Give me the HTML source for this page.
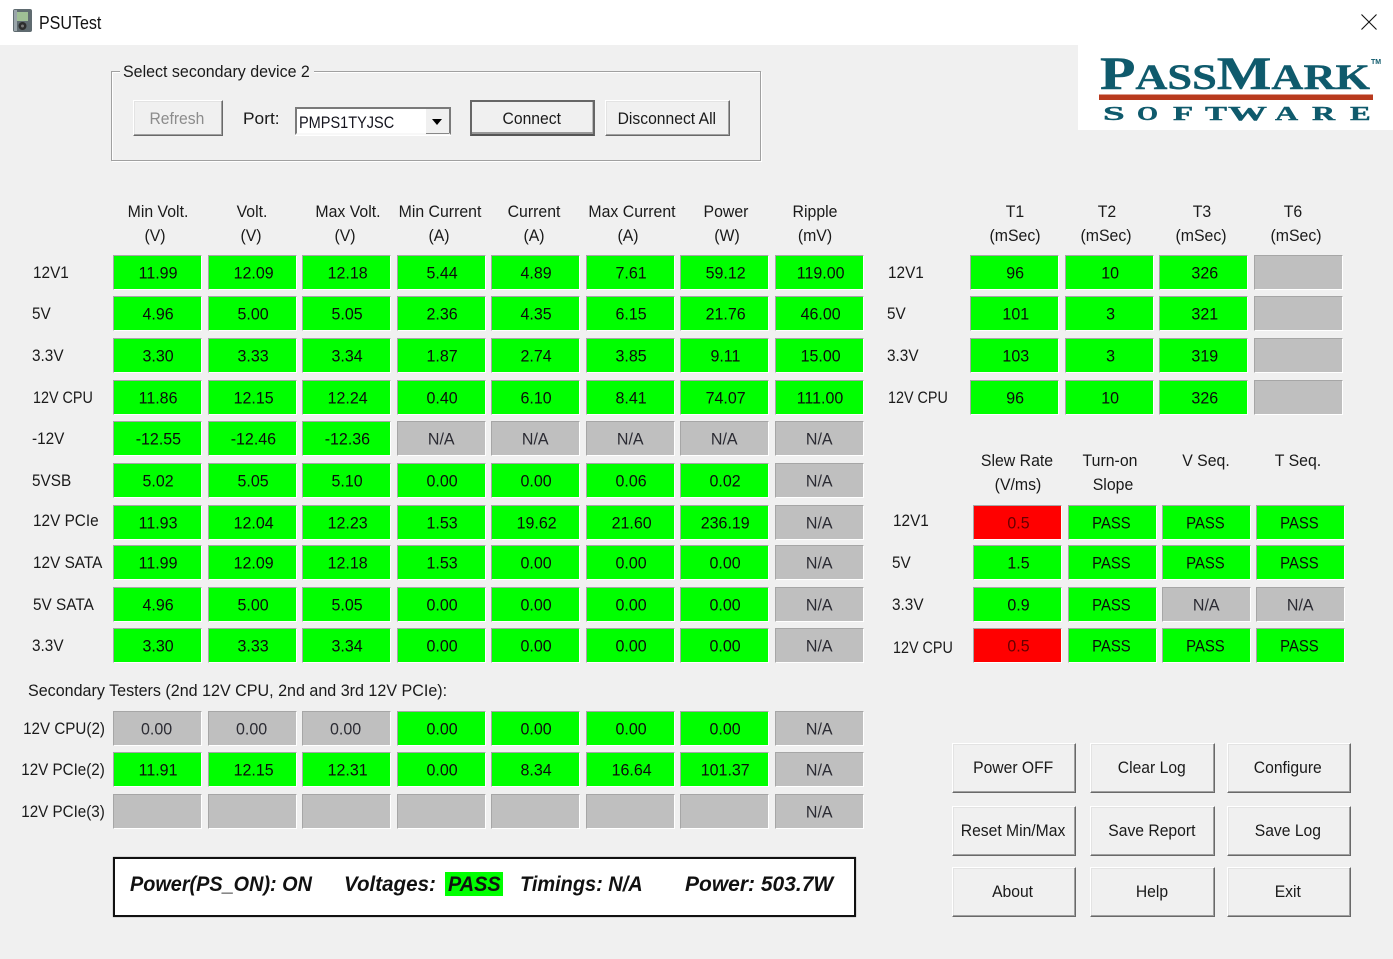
<!DOCTYPE html>
<html><head><meta charset="utf-8"><title>PSUTest</title>
<style>
html,body{margin:0;padding:0;width:1393px;height:959px;overflow:hidden;background:#f0f0f0}
body{position:relative;font:16.5px "Liberation Sans",sans-serif;color:#1a1a1a}
#title{position:absolute;left:0;top:0;width:1393px;height:45px;background:#fff}
.t,.l,.rt{position:absolute;white-space:nowrap;line-height:20px}
.t{transform:translate(-50%,-50%) scaleX(.96)}
.l{transform:translateY(-50%) scaleX(.93);transform-origin:left center}
.l.k{transform:translateY(-50%) scaleX(.87)}
.rt{transform:translateY(-50%) scaleX(.92);transform-origin:right center}
.r{position:absolute;left:0;top:0;width:1393px;height:35px}
.r span{position:absolute;top:0;width:87px;height:33px;border:1px solid;border-color:#a6a6a6 #fff #fff #a6a6a6;display:flex;align-items:center;justify-content:center;color:#0c0c0c}
.r span b{font-weight:normal;display:block;transform:translate(1px,.5px) scaleX(.97);line-height:20px}
.r span b.o{transform:translate(-1px,.5px) scaleX(.9)}
.r .g{background:#00ff00}
.r .n{background:#bfbfbf;color:#2b2b33}
.r .n b{transform:translate(-.5px,.5px) scaleX(.97)}
.r .x{background:#ff0000;color:#600}
.a{left:113px}.b{left:208px}.c{left:302px}.d{left:397px}.e{left:491px}.f{left:586px}.h{left:680px}.j{left:775px}
.p{left:970px}.q{left:1065px}.s{left:1159px}.u{left:1254px}
.v{left:973px}.w{left:1068px}.y{left:1162px}.z{left:1256px}
.btn{position:absolute;box-sizing:border-box;background:#f0f0f0;border:1px solid;border-color:#fff #696969 #696969 #fff;box-shadow:inset -1px -1px 0 #a0a0a0,inset 1px 1px 0 #e3e3e3;display:flex;align-items:center;justify-content:center}
.btn b{font-weight:normal;display:block;transform:translateX(-1px) scaleX(.95);white-space:nowrap}
.btn.top b{transform:translate(-1px,1px) scaleX(.95)}
#status{position:absolute;left:113px;top:857px;width:739px;height:56px;background:#fff;border:2px solid #111;box-shadow:0 0 1px #777}
.st{position:absolute;top:885px;white-space:nowrap;font:italic bold 21px "Liberation Sans",sans-serif;color:#111;transform:translateY(-50%);transform-origin:left center;line-height:24px}
</style></head><body>
<div id="title"></div>
<svg style="position:absolute;left:13px;top:9px" width="20" height="24" viewBox="0 0 20 24"><rect x="0" y="0" width="19" height="23" rx="2" fill="#5f6b70"/><rect x="1" y="1" width="3" height="21" fill="#9aa5aa"/><rect x="4" y="3" width="11" height="9" fill="#9fbf95"/><circle cx="9.5" cy="17" r="4" fill="#2d2d2d"/><circle cx="9.5" cy="17" r="1.5" fill="#777"/></svg>
<div class="l" style="left:39px;top:23px;color:#111;font-size:18px;transform:translateY(-50%) scaleX(.89)">PSUTest</div>
<svg style="position:absolute;left:1360px;top:13px" width="18" height="18" viewBox="0 0 18 18"><path d="M1.5 1.5L16.5 16.5M16.5 1.5L1.5 16.5" stroke="#111" stroke-width="1.1" fill="none"/></svg>

<svg style="position:absolute;left:1078px;top:45px" width="315" height="85" viewBox="0 0 315 85">
<rect width="315" height="85" fill="#fff"/>
<text x="22" y="44" textLength="270" lengthAdjust="spacingAndGlyphs" font-family="Liberation Serif" font-weight="bold" fill="#0f5a6c" stroke="#0f5a6c" stroke-width=".4"><tspan font-size="47">P</tspan><tspan font-size="36">ASS</tspan><tspan font-size="47">M</tspan><tspan font-size="36">ARK</tspan></text>
<text x="293" y="19" font-family="Liberation Sans" font-weight="bold" font-size="7" fill="#0f5a6c">TM</text>
<rect x="21" y="49.5" width="274" height="5.5" fill="#b83a1e"/>
<g font-family="Liberation Serif" font-weight="bold" font-size="20" fill="#0f5a6c" stroke="#0f5a6c" stroke-width=".4">
<text transform="translate(25,75) scale(1.95,1)">S</text>
<text transform="translate(59,75) scale(1.35,1)">O</text>
<text transform="translate(95,75) scale(1.65,1)">F</text>
<text transform="translate(127,75) scale(1.65,1)">T</text>
<text transform="translate(150,75) scale(1.95,1)">W</text>
<text transform="translate(197,75) scale(1.6,1)">A</text>
<text transform="translate(234,75) scale(1.6,1)">R</text>
<text transform="translate(272,75) scale(1.55,1)">E</text>
</g></svg>

<div style="position:absolute;left:111px;top:71px;width:648px;height:88px;border:1px solid #a0a0a0;box-shadow:1px 1px 0 #fff,inset 1px 1px 0 #fff"></div>
<div style="position:absolute;left:120px;top:62px;width:194px;height:20px;background:#f0f0f0"></div>
<div class="l" style="left:123px;top:72px;transform:translateY(-50%) scaleX(.97)">Select secondary device 2</div>
<div class="btn top" style="left:133px;top:100px;width:90px;height:36px;color:#8c8c8c"><b>Refresh</b></div>
<div class="l" style="left:243px;top:119px;transform:translateY(-50%) scaleX(1.05)">Port:</div>
<div style="position:absolute;left:295px;top:107px;width:152px;height:24px;background:#fff;border:2px solid;border-color:#7a7a7a #7a7a7a #f8f8f8 #7a7a7a;border-right-color:#7a7a7a;box-shadow:0 1px 0 #fff"></div>
<div style="position:absolute;left:426px;top:109px;width:23px;height:25px;background:#f0f0f0;border-bottom:1px solid #888;box-sizing:border-box"></div>
<div style="position:absolute;left:432px;top:119px;width:0;height:0;border:5px solid transparent;border-top:6px solid #000;border-bottom:0"></div>
<div class="l" style="left:299px;top:123px;color:#14141e;transform:translateY(-50%) scaleX(.88)">PMPS1TYJSC</div>
<div class="btn top" style="left:470px;top:100px;width:125px;height:36px;border:2px solid #666;border-bottom-color:#555;box-shadow:inset 0 -2px 0 #999,inset -1px 0 0 #bbb"><b>Connect</b></div>
<div class="btn top" style="left:605px;top:100px;width:125px;height:36px"><b>Disconnect All</b></div>

<div class="t" style="left:158px;top:212px">Min Volt.</div><div class="t" style="left:155px;top:236px">(V)</div>
<div class="t" style="left:252px;top:212px">Volt.</div><div class="t" style="left:251px;top:236px">(V)</div>
<div class="t" style="left:348px;top:212px">Max Volt.</div><div class="t" style="left:345px;top:236px">(V)</div>
<div class="t" style="left:440px;top:212px">Min Current</div><div class="t" style="left:439px;top:236px">(A)</div>
<div class="t" style="left:534px;top:212px">Current</div><div class="t" style="left:534px;top:236px">(A)</div>
<div class="t" style="left:632px;top:212px">Max Current</div><div class="t" style="left:628px;top:236px">(A)</div>
<div class="t" style="left:726px;top:212px">Power</div><div class="t" style="left:727px;top:236px">(W)</div>
<div class="t" style="left:815px;top:212px">Ripple</div><div class="t" style="left:815px;top:236px">(mV)</div>
<div class="t" style="left:1015px;top:212px">T1</div><div class="t" style="left:1015px;top:236px">(mSec)</div>
<div class="t" style="left:1107px;top:212px">T2</div><div class="t" style="left:1106px;top:236px">(mSec)</div>
<div class="t" style="left:1202px;top:212px">T3</div><div class="t" style="left:1201px;top:236px">(mSec)</div>
<div class="t" style="left:1293px;top:212px">T6</div><div class="t" style="left:1296px;top:236px">(mSec)</div>

<div class="l" style="left:33px;top:273px">12V1</div>
<div class="l" style="left:32px;top:314px">5V</div>
<div class="l" style="left:32px;top:356px">3.3V</div>
<div class="l k" style="left:33px;top:398px">12V CPU</div>
<div class="l" style="left:32px;top:439px">-12V</div>
<div class="l" style="left:32px;top:481px">5VSB</div>
<div class="l" style="left:33px;top:521px">12V PCIe</div>
<div class="l" style="left:33px;top:563px">12V SATA</div>
<div class="l" style="left:33px;top:605px">5V SATA</div>
<div class="l" style="left:32px;top:646px">3.3V</div>

<div class="r" style="top:255px"><span class="a g"><b>11.99</b></span><span class="b g"><b>12.09</b></span><span class="c g"><b>12.18</b></span><span class="d g"><b>5.44</b></span><span class="e g"><b>4.89</b></span><span class="f g"><b>7.61</b></span><span class="h g"><b>59.12</b></span><span class="j g"><b>119.00</b></span><span class="p g"><b>96</b></span><span class="q g"><b>10</b></span><span class="s g"><b>326</b></span><span class="u n"></span></div>
<div class="r" style="top:296px"><span class="a g"><b>4.96</b></span><span class="b g"><b>5.00</b></span><span class="c g"><b>5.05</b></span><span class="d g"><b>2.36</b></span><span class="e g"><b>4.35</b></span><span class="f g"><b>6.15</b></span><span class="h g"><b>21.76</b></span><span class="j g"><b>46.00</b></span><span class="p g"><b>101</b></span><span class="q g"><b>3</b></span><span class="s g"><b>321</b></span><span class="u n"></span></div>
<div class="r" style="top:338px"><span class="a g"><b>3.30</b></span><span class="b g"><b>3.33</b></span><span class="c g"><b>3.34</b></span><span class="d g"><b>1.87</b></span><span class="e g"><b>2.74</b></span><span class="f g"><b>3.85</b></span><span class="h g"><b>9.11</b></span><span class="j g"><b>15.00</b></span><span class="p g"><b>103</b></span><span class="q g"><b>3</b></span><span class="s g"><b>319</b></span><span class="u n"></span></div>
<div class="r" style="top:380px"><span class="a g"><b>11.86</b></span><span class="b g"><b>12.15</b></span><span class="c g"><b>12.24</b></span><span class="d g"><b>0.40</b></span><span class="e g"><b>6.10</b></span><span class="f g"><b>8.41</b></span><span class="h g"><b>74.07</b></span><span class="j g"><b>111.00</b></span><span class="p g"><b>96</b></span><span class="q g"><b>10</b></span><span class="s g"><b>326</b></span><span class="u n"></span></div>
<div class="r" style="top:421px"><span class="a g"><b>-12.55</b></span><span class="b g"><b>-12.46</b></span><span class="c g"><b>-12.36</b></span><span class="d n"><b>N/A</b></span><span class="e n"><b>N/A</b></span><span class="f n"><b>N/A</b></span><span class="h n"><b>N/A</b></span><span class="j n"><b>N/A</b></span></div>
<div class="r" style="top:463px"><span class="a g"><b>5.02</b></span><span class="b g"><b>5.05</b></span><span class="c g"><b>5.10</b></span><span class="d g"><b>0.00</b></span><span class="e g"><b>0.00</b></span><span class="f g"><b>0.06</b></span><span class="h g"><b>0.02</b></span><span class="j n"><b>N/A</b></span></div>
<div class="r" style="top:505px"><span class="a g"><b>11.93</b></span><span class="b g"><b>12.04</b></span><span class="c g"><b>12.23</b></span><span class="d g"><b>1.53</b></span><span class="e g"><b>19.62</b></span><span class="f g"><b>21.60</b></span><span class="h g"><b>236.19</b></span><span class="j n"><b>N/A</b></span><span class="v x"><b>0.5</b></span><span class="w g"><b class="o">PASS</b></span><span class="y g"><b class="o">PASS</b></span><span class="z g"><b class="o">PASS</b></span></div>
<div class="r" style="top:545px"><span class="a g"><b>11.99</b></span><span class="b g"><b>12.09</b></span><span class="c g"><b>12.18</b></span><span class="d g"><b>1.53</b></span><span class="e g"><b>0.00</b></span><span class="f g"><b>0.00</b></span><span class="h g"><b>0.00</b></span><span class="j n"><b>N/A</b></span><span class="v g"><b>1.5</b></span><span class="w g"><b class="o">PASS</b></span><span class="y g"><b class="o">PASS</b></span><span class="z g"><b class="o">PASS</b></span></div>
<div class="r" style="top:587px"><span class="a g"><b>4.96</b></span><span class="b g"><b>5.00</b></span><span class="c g"><b>5.05</b></span><span class="d g"><b>0.00</b></span><span class="e g"><b>0.00</b></span><span class="f g"><b>0.00</b></span><span class="h g"><b>0.00</b></span><span class="j n"><b>N/A</b></span><span class="v g"><b>0.9</b></span><span class="w g"><b class="o">PASS</b></span><span class="y n"><b>N/A</b></span><span class="z n"><b>N/A</b></span></div>
<div class="r" style="top:628px"><span class="a g"><b>3.30</b></span><span class="b g"><b>3.33</b></span><span class="c g"><b>3.34</b></span><span class="d g"><b>0.00</b></span><span class="e g"><b>0.00</b></span><span class="f g"><b>0.00</b></span><span class="h g"><b>0.00</b></span><span class="j n"><b>N/A</b></span><span class="v x"><b>0.5</b></span><span class="w g"><b class="o">PASS</b></span><span class="y g"><b class="o">PASS</b></span><span class="z g"><b class="o">PASS</b></span></div>

<div class="l" style="left:888px;top:273px">12V1</div>
<div class="l" style="left:887px;top:314px">5V</div>
<div class="l" style="left:887px;top:356px">3.3V</div>
<div class="l k" style="left:888px;top:398px">12V CPU</div>

<div class="t" style="left:1017px;top:461px">Slew Rate</div><div class="t" style="left:1018px;top:485px">(V/ms)</div>
<div class="t" style="left:1110px;top:461px">Turn-on</div><div class="t" style="left:1113px;top:485px">Slope</div>
<div class="t" style="left:1206px;top:461px">V Seq.</div>
<div class="t" style="left:1298px;top:461px">T Seq.</div>
<div class="l" style="left:893px;top:521px">12V1</div>
<div class="l" style="left:892px;top:563px">5V</div>
<div class="l" style="left:892px;top:605px">3.3V</div>
<div class="l k" style="left:893px;top:648px">12V CPU</div>

<div class="l" style="left:28px;top:691px;transform:translateY(-50%) scaleX(.975)">Secondary Testers (2nd 12V CPU, 2nd and 3rd 12V PCIe):</div>
<div class="rt" style="right:1288px;top:729px">12V CPU(2)</div>
<div class="rt" style="right:1288px;top:770px">12V PCIe(2)</div>
<div class="rt" style="right:1288px;top:812px">12V PCIe(3)</div>
<div class="r" style="top:711px"><span class="a n"><b>0.00</b></span><span class="b n"><b>0.00</b></span><span class="c n"><b>0.00</b></span><span class="d g"><b>0.00</b></span><span class="e g"><b>0.00</b></span><span class="f g"><b>0.00</b></span><span class="h g"><b>0.00</b></span><span class="j n"><b>N/A</b></span></div>
<div class="r" style="top:752px"><span class="a g"><b>11.91</b></span><span class="b g"><b>12.15</b></span><span class="c g"><b>12.31</b></span><span class="d g"><b>0.00</b></span><span class="e g"><b>8.34</b></span><span class="f g"><b>16.64</b></span><span class="h g"><b>101.37</b></span><span class="j n"><b>N/A</b></span></div>
<div class="r" style="top:794px"><span class="a n"></span><span class="b n"></span><span class="c n"></span><span class="d n"></span><span class="e n"></span><span class="f n"></span><span class="h n"></span><span class="j n"><b>N/A</b></span></div>

<div id="status"></div>
<div style="position:absolute;left:445px;top:872px;width:58px;height:24px;background:#00ff00"></div>
<div class="st" style="left:130px;transform:translateY(-50%) scaleX(.945)">Power(PS_ON): ON</div>
<div class="st" style="left:344px;transform:translateY(-50%) scaleX(.98)">Voltages:</div>
<div class="st" style="left:448px;transform:translateY(-50%) scaleX(.945)">PASS</div>
<div class="st" style="left:520px;transform:translateY(-50%) scaleX(.95)">Timings: N/A</div>
<div class="st" style="left:685px;transform:translateY(-50%) scaleX(1)">Power: 503.7W</div>

<div class="btn" style="left:952px;top:743px;width:124px;height:50px"><b>Power OFF</b></div>
<div class="btn" style="left:1090px;top:743px;width:125px;height:50px"><b>Clear Log</b></div>
<div class="btn" style="left:1227px;top:743px;width:124px;height:50px"><b>Configure</b></div>
<div class="btn" style="left:952px;top:806px;width:124px;height:50px"><b>Reset Min/Max</b></div>
<div class="btn" style="left:1090px;top:806px;width:125px;height:50px"><b>Save Report</b></div>
<div class="btn" style="left:1227px;top:806px;width:124px;height:50px"><b>Save Log</b></div>
<div class="btn" style="left:952px;top:867px;width:124px;height:50px"><b>About</b></div>
<div class="btn" style="left:1090px;top:867px;width:125px;height:50px"><b>Help</b></div>
<div class="btn" style="left:1227px;top:867px;width:124px;height:50px"><b>Exit</b></div>
</body></html>
